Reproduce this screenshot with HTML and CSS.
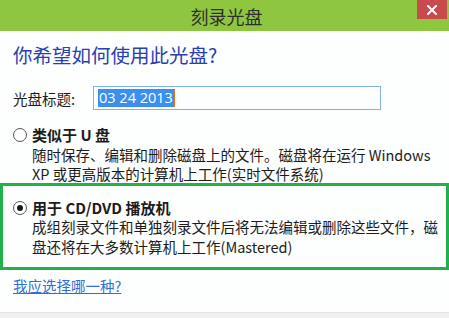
FILE: index.html
```html
<!DOCTYPE html>
<html lang="zh-CN">
<head>
    <meta charset="UTF-8">
    <meta name="viewport" content="width=device-width, initial-scale=1.0">
    <title>刻录光盘</title>

    <link rel="stylesheet" href="styles.css">
</head>
<body>
    <header class="titlebar">
        <h2>刻录光盘</h2>
        <a href="#" class="close" title="关闭">
            <svg width="10" height="10" viewBox="0 0 10 10">
                <path d="M1 1 L9 9 M9 1 L1 9" stroke="#fff" stroke-width="2" stroke-linecap="square"/>
            </svg>
        </a>
    </header>

    <main class="dialog">
        <h1>你希望如何使用此光盘?</h1>

        <div class="field">
            <label>光盘标题:</label>
            <div class="input">
                <span class="sel">03 24 2013</span><span class="caret"></span>
            </div>
        </div>

        <!-- 두 가지 옵션 -->
        <div class="option">
            <span class="radio"></span>
            <div class="text">
                <strong>类似于 U 盘</strong>
                <p>随时保存、编辑和删除磁盘上的文件。磁盘将在运行 Windows<br>XP 或更高版本的计算机上工作(实时文件系统)</p>
            </div>
        </div>

        <div class="option chosen">
            <span class="radio on"></span>
            <div class="text">
                <strong>用于 CD/DVD 播放机</strong>
                <p>成组刻录文件和单独刻录文件后将无法编辑或删除这些文件，磁<br>盘还将在大多数计算机上工作(Mastered)</p>
            </div>
        </div>

        <a href="#" class="help">我应选择哪一种?</a>
    </main>

    <footer class="bottom"></footer>
</body>
</html>
```

FILE: styles.css
```css
* {
    margin:0;
    padding:0;
    box-sizing:border-box;
}

body {
    display:flex;
    flex-direction:column;
    height:318px;
    overflow:hidden;
    background:#fdfefe;
    color:#1c1c1c;
    font-family:"Noto Sans CJK SC", "Noto Sans", sans-serif;
    font-size:14.5px;
}

.titlebar {
    position:relative;
    display:flex;
    justify-content:center;
    align-items:center;
    height:31px;
    background:#8fc63f;
}

.titlebar h2 {
    font-size:18px;
    font-weight:400;
    color:#2e2e2e;
    line-height:1;
    margin-left:4px;
}

.close {
    position:absolute;
    top:0;
    right:2px;
    display:flex;
    justify-content:center;
    align-items:center;
    width:30px;
    height:19px;
    background:#c94a4c;
}

.dialog {
    padding:0 0 0 13px;
}

.dialog h1 {
    margin-top:10px;
    font-size:19.5px;
    line-height:28px;
    font-weight:400;
    color:#2a40b0;
}

.field {
    display:flex;
    align-items:center;
    margin-top:17px;
}

.field label {
    width:80px;
    font-size:14.5px;
}

.input {
    display:flex;
    align-items:center;
    width:288px;
    height:24px;
    padding-left:4px;
    border:1px solid #7db3ea;
}

.sel {
    display:block;
    height:18px;
    padding:0 1px;
    line-height:18px;
    background:#3a8ff0;
    color:#fff;
    font-family:"Open Sans", sans-serif;
    font-size:14.5px;
}

.caret {
    display:block;
    width:1px;
    height:18px;
    background:#e8741c;
}

.option {
    display:flex;
    align-items:flex-start;
    line-height:19.5px;
    margin-top:15px;
}

.option strong {
    display:block;
    font-size:15px;
}

.radio {
    width:14px;
    height:14px;
    margin:3px 5px 0 0;
    border:1px solid #555;
    border-radius:50%;
    background:#fff;
    flex-shrink:0;
}

.radio.on {
    position:relative;
}

.radio.on::after {
    content:'';
    position:absolute;
    top:3px;
    left:3px;
    width:6px;
    height:6px;
    border-radius:50%;
    background:#1a1a1a;
}

.option.chosen {
    margin:-1px 0 0 -13px;
    padding:12px 0 11px 10px;
    width:449px;
    border:3px solid #22b04b;
}

.help {
    display:inline-block;
    margin-top:6px;
    line-height:19.5px;
    color:#2f6fd6;
    text-decoration:underline;
}

.bottom {
    margin-top:auto;
    height:6px;
    background:#f0f0f0;
    border-top:1px solid #e2e2e2;
}
```
